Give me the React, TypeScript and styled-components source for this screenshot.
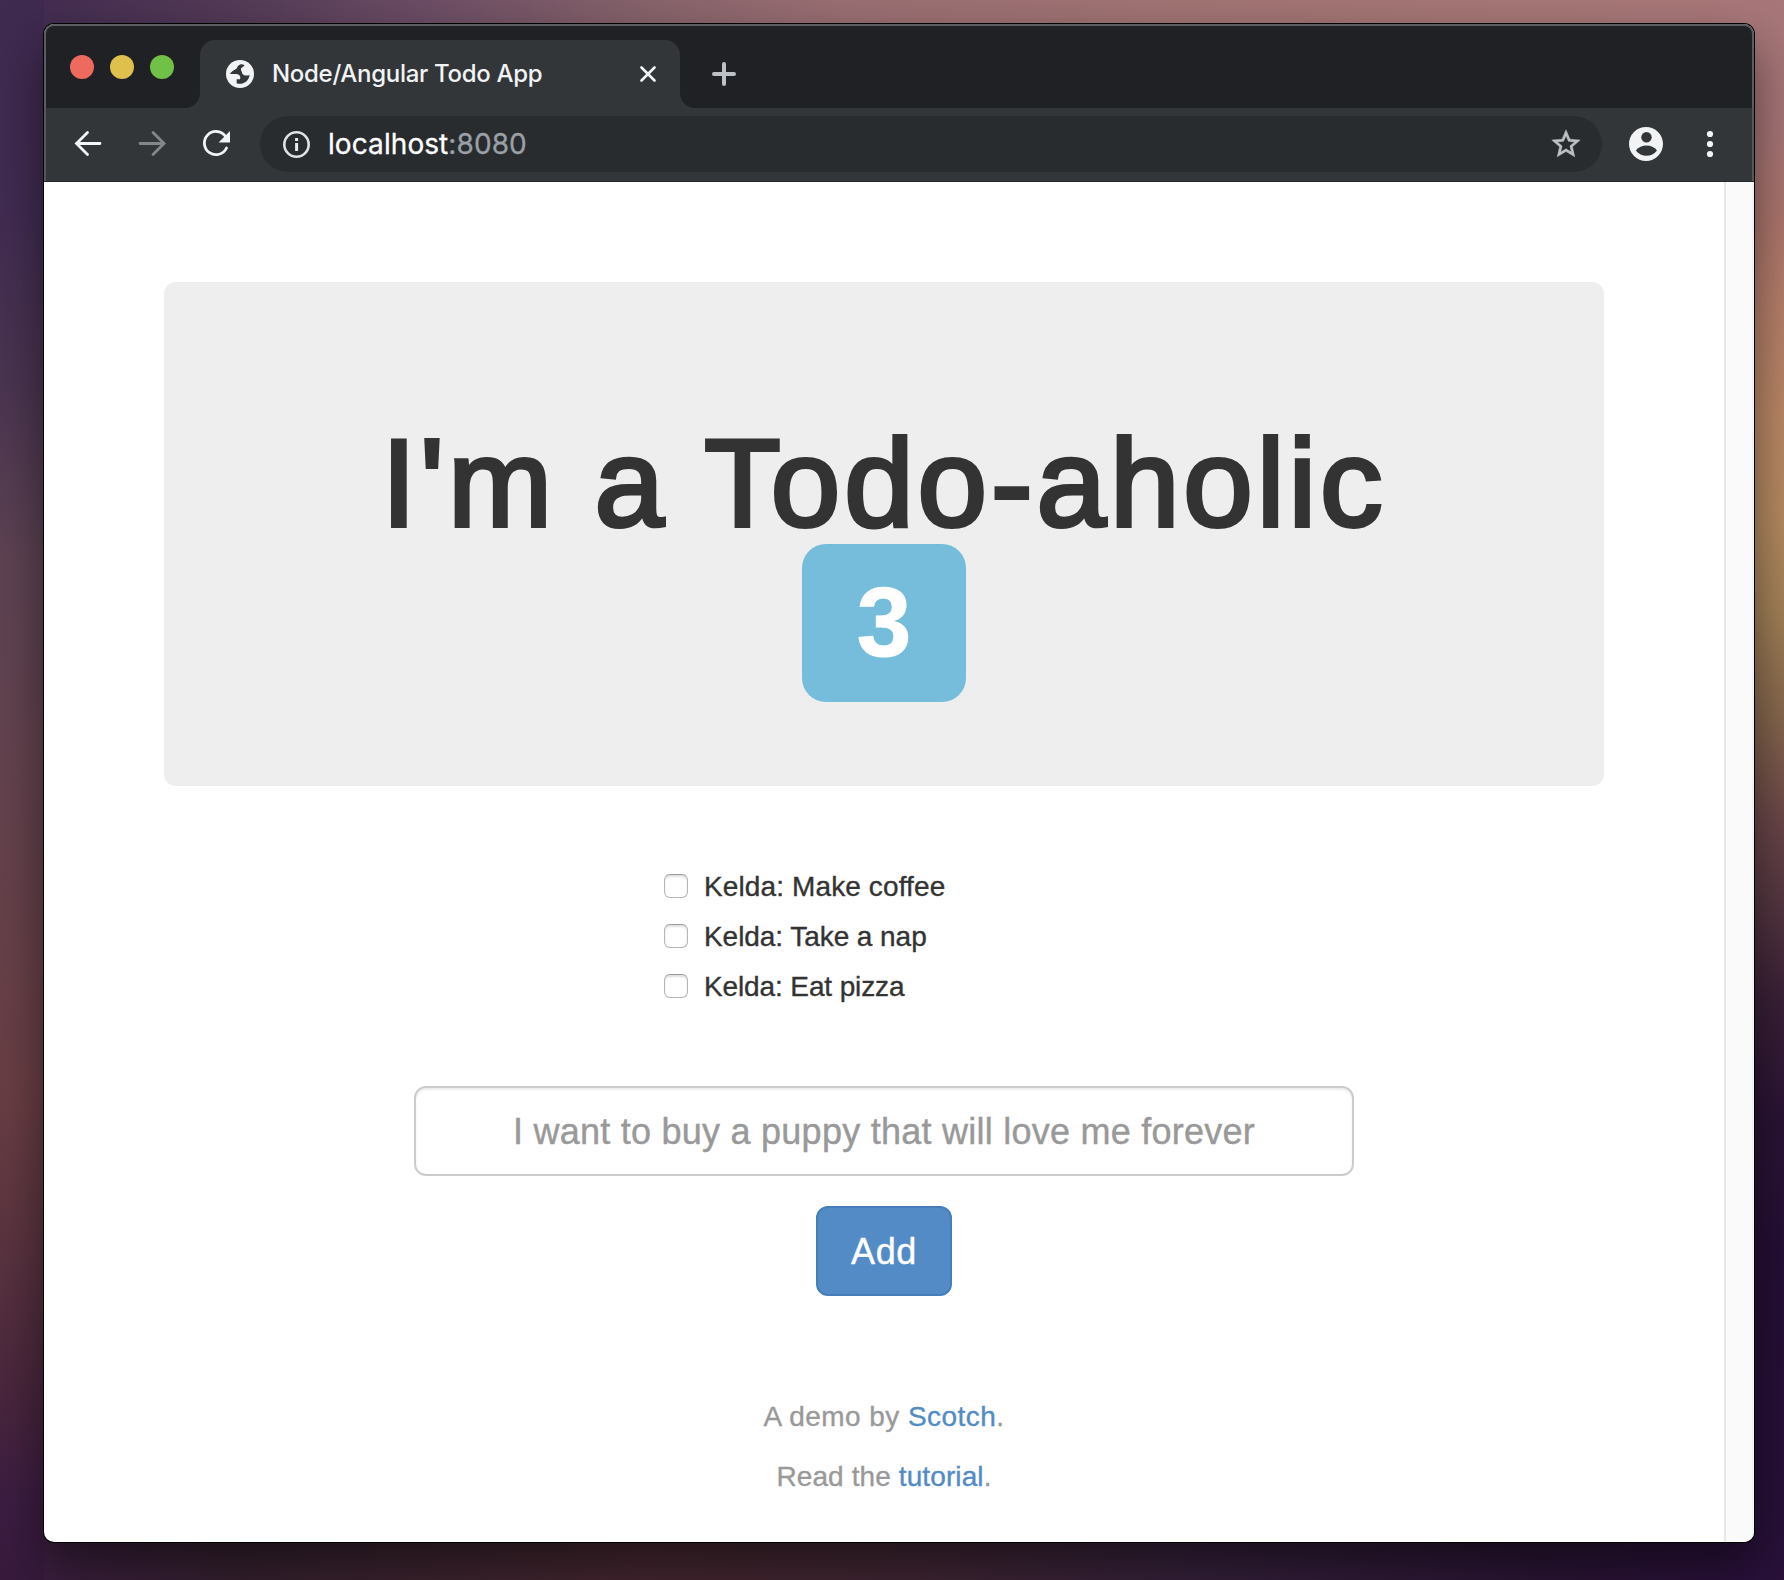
import React, { useState } from 'react';
import styled, { createGlobalStyle } from 'styled-components';

const helvetica = '"Liberation Sans", Arial, sans-serif';
const system = 'Inter, Roboto, sans-serif';

const GlobalStyle = createGlobalStyle`
  *, *::before, *::after { box-sizing: border-box; }
  body { margin: 0; font-family: ${helvetica}; color: #333; }
`;

const Desktop = styled.div`
  width: 1784px;
  height: 1580px;
  padding: 24px 30px 38px 44px;
  overflow: hidden;
  background:
    linear-gradient(90deg, #442d51 0, #543b57 200px, #6c4d65 380px, #87636b 600px, #9a6f73 800px, #a27474 1150px, #a67776 1450px, #a97779 1710px) 44px 0 / 1710px 60px no-repeat,
    linear-gradient(90deg, #3a1e3e 0, #34202e 200px, #44262f 600px, #3f2532 850px, #34203a 1150px, #2a1434 1500px, #29103a 1710px) 44px 1520px / 1710px 60px no-repeat,
    linear-gradient(180deg, #3f2a50 0, #412b52 200px, #4a3451 380px, #5e4353 560px, #64434f 760px, #684048 980px, #693e44 1100px, #5b3440 1240px, #4a263d 1390px, #3c1d42 1500px, #371a3c 1580px) 0 0 / 44px 1580px no-repeat,
    linear-gradient(180deg, #a77779 0, #a77577 130px, #ad766d 220px, #b67f6b 300px, #bb8966 420px, #b68b61 520px, #a48258 610px, #86674e 720px, #6b4749 820px, #50333f 920px, #3a2037 1000px, #2b1435 1110px, #250f35 1250px, #29113a 1580px) 1754px 0 / 30px 1580px no-repeat,
    #2b1739;
`;

const Window = styled.div`
  display: flex;
  flex-direction: column;
  height: 1518px;
  overflow: hidden;
  border-radius: 10px;
  background: #fff;
  box-shadow: 0 0 0 1px #000, 0 22px 50px rgba(0, 0, 0, 0.5);
`;

const Chrome = styled.header`
  flex: none;
  height: 158px;
  background: #323639;
  border-radius: 10px 10px 0 0;
  border-bottom: 1px solid #25282a;
  overflow: hidden;
  box-shadow: inset 2px 0 #55585b, inset -2px 0 #55585b;
`;

const TabStrip = styled.div`
  display: flex;
  height: 84px;
  padding: 14px 0 0 24px;
  background: #202124;
  border-radius: 10px 10px 0 0;
  border: solid #5c5d60;
  border-width: 2px 2px 0;
`;

const Lights = styled.div`
  display: flex;
  gap: 16px;
  width: 130px;
  padding-top: 15px;
`;

const Light = styled.span<{ $color: string }>`
  width: 24px;
  height: 24px;
  border-radius: 50%;
  background: ${(p) => p.$color};
`;

const Tab = styled.div`
  position: relative;
  display: flex;
  align-items: center;
  width: 480px;
  height: 68px;
  padding: 0 24px 0 26px;
  border-radius: 15px 15px 0 0;
  background: #323639;

  &::before, &::after {
    content: '';
    position: absolute;
    bottom: 0;
    width: 15px;
    height: 15px;
  }
  &::before { left: -15px; background: radial-gradient(circle at 0 0, transparent 14.5px, #323639 15.5px); }
  &::after { right: -15px; background: radial-gradient(circle at 100% 0, transparent 14.5px, #323639 15.5px); }
`;

const TabTitle = styled.span`
  flex: 1;
  margin: 0 0 0 18px;
  font: 500 24px/30px ${system};
  letter-spacing: -0.3px;
  color: #f1f3f4;
  white-space: nowrap;
`;

const NewTab = styled.div`
  padding: 22px 0 0 32px;
`;

const Toolbar = styled.div`
  display: flex;
  align-items: center;
  height: 73px;
  padding: 0 0 1px 26px;
`;

const NavIcons = styled.div`
  display: flex;
  flex: none;
  align-items: center;
  gap: 28px;
  width: 190px;
  margin-top: -1px;
`;

const Omnibox = styled.div`
  display: flex;
  flex: none;
  align-items: center;
  width: 1342px;
  height: 56px;
  padding: 0 19px 0 18px;
  border-radius: 28px;
  background: #282c2f;
`;

const Url = styled.span`
  flex: 1;
  margin: 0 0 0 12px;
  font: 400 28px/36px ${system};
  letter-spacing: 0.08px;
  color: #fff;
  -webkit-text-stroke: 0.3px;
`;

const Port = styled.span`
  color: #9aa0a6;
`;

const Actions = styled.div`
  display: flex;
  flex: none;
  align-items: center;
  gap: 27px;
  margin: -1px 0 0 27px;
`;

const Viewport = styled.div`
  display: flex;
  flex: 1;
`;

const Page = styled.main`
  display: flex;
  flex-direction: column;
  align-items: center;
  width: 1680px;
  padding-top: 100px;
`;

const ScrollTrack = styled.div`
  width: 30px;
  border-left: 2px solid #e7e7e7;
  background: linear-gradient(90deg, #fafafa 26px, #f1f3f4 26px);
`;

const Jumbotron = styled.section`
  display: flex;
  flex-direction: column;
  align-items: center;
  width: 1440px;
  height: 504px;
  padding-top: 146px;
  border-radius: 12px;
  background: #eee;
`;

const Heading = styled.h1`
  margin: 0;
  font: 400 125px/110px ${helvetica};
  letter-spacing: 3.9px;
  -webkit-text-stroke: 4px #333;
  white-space: nowrap;
`;

const Badge = styled.span`
  width: 164px;
  height: 158px;
  margin-top: 6px;
  border-radius: 24px;
  background: #75bddb;
  color: #fff;
  font: 700 98px/157px ${helvetica};
  text-align: center;
  -webkit-text-stroke: 1px;
`;

const TodoList = styled.div`
  display: flex;
  flex-direction: column;
  gap: 10px;
  width: 440px;
  margin-top: 80px;
`;

const Todo = styled.label`
  display: flex;
  align-items: center;
  gap: 16px;
  height: 40px;
  font-size: 28px;
`;

const TodoText = styled.span<{ $spacing: number }>`
  padding-top: 2px;
  letter-spacing: ${(p) => p.$spacing}px;
  -webkit-text-stroke: 0.35px;
`;

const Checkbox = styled.input`
  appearance: none;
  width: 24px;
  height: 24px;
  margin: 0;
  border: 1.5px solid #b5b5b5;
  border-top-color: #999;
  border-radius: 6px;
  background: #fff;
  box-shadow: inset 0 2px 2px rgba(0, 0, 0, 0.12);
`;

const Field = styled.input`
  width: 940px;
  height: 90px;
  margin-top: 80px;
  padding: 2px 32px 0;
  border: 2px solid #ccc;
  border-radius: 12px;
  background: #fff;
  box-shadow: inset 0 2px 2px rgba(0, 0, 0, 0.075);
  color: #333;
  font: 36px ${helvetica};
  letter-spacing: 0.25px;
  text-align: center;
  -webkit-text-stroke: 0.4px;

  &::placeholder { color: #999; opacity: 1; }
`;

const AddButton = styled.button`
  width: 136px;
  height: 90px;
  margin-top: 30px;
  padding: 2px 0 0;
  border: 2px solid #457eb9;
  border-radius: 12px;
  background: #528bc5;
  color: #fff;
  font: 36px ${helvetica};
  letter-spacing: 0.6px;
  -webkit-text-stroke: 0.4px;
`;

const Footer = styled.footer`
  display: flex;
  flex-direction: column;
  gap: 20px;
  margin-top: 101px;
  color: #999;
  font-size: 28px;
  line-height: 40px;
  text-align: center;
  -webkit-text-stroke: 0.35px;
`;

const Line = styled.p<{ $spacing: number }>`
  margin: 0;
  letter-spacing: ${(p) => p.$spacing}px;
`;

const Link = styled.a`
  color: #528bc5;
  text-decoration: none;
`;

const todos = [
  { text: 'Kelda: Make coffee', spacing: 0.12 },
  { text: 'Kelda: Take a nap', spacing: -0.06 },
  { text: 'Kelda: Eat pizza', spacing: -0.12 },
];

const Globe = () => (
  <svg width="28" height="28" viewBox="0 0 16 16">
    <circle cx="8" cy="8" r="8" fill="#f1f3f4" />
    <path
      fill="#323639"
      d="M2.4 8C2.4 7 4.5 5.8 6 5C6.5 4 6.8 2.8 8.2 2.5C9.2 2.4 10 2.6 10.6 3C10 3.8 9 4.1 8.6 4.9C8.2 6 9.3 6.8 9.3 7.8C10.2 9 12.5 9.2 13.5 8.4C13.3 11.2 10.9 13.6 8 13.6C7.2 13.6 6.6 13.5 6.1 13.3V11H8C8.6 9.2 7.5 8 5.7 8Z"
    />
  </svg>
);

const Close = () => (
  <svg width="16" height="16" viewBox="0 0 16 16" stroke="#f1f3f4" strokeWidth="2.6" strokeLinecap="round">
    <path d="M1.5 1.5l13 13M14.5 1.5l-13 13" />
  </svg>
);

const Plus = () => (
  <svg width="24" height="24" viewBox="0 0 24 24" stroke="#bdc1c6" strokeWidth="4" strokeLinecap="round">
    <path d="M2 12h20M12 2v20" />
  </svg>
);

const Arrow = ({ forward = false }: { forward?: boolean }) => (
  <svg width="36" height="36" viewBox="0 0 36 36" fill="none" stroke={forward ? '#84878a' : '#f5f6f7'} strokeWidth="2.8" strokeLinecap="round">
    <path d={forward ? 'M6 17.5H30M19 6.5L30 17.5L19 28.5' : 'M30 17.5H6.5M17.5 6.5L6.5 17.5L17.5 28.5'} />
  </svg>
);

const Reload = () => (
  <svg width="36" height="36" viewBox="0 0 36 36" fill="none">
    <path d="M27.2 10A11.6 11.6 0 1 0 28.5 22" stroke="#f1f3f4" strokeWidth="2.8" strokeLinecap="round" />
    <path d="M32 5v11.4H20.6z" fill="#f1f3f4" />
  </svg>
);

const Info = () => (
  <svg width="38" height="38" viewBox="0 0 38 38" fill="none">
    <circle cx="18.5" cy="19.5" r="12.2" stroke="#dfe1e5" strokeWidth="2.6" />
    <path d="M17.1 18h3v8h-3zM17.1 13h3v3h-3z" fill="#e8eaed" />
  </svg>
);

const Star = () => (
  <svg width="34" height="34" viewBox="0 0 24 24" fill="#bdc1c6" stroke="#bdc1c6" strokeWidth="0.35">
    <path d="M22 9.24l-7.19-.62L12 2 9.19 8.63 2 9.24l5.46 4.73L5.82 21 12 17.27 18.18 21l-1.63-7.03L22 9.24zM12 15.4l-3.76 2.27 1-4.28-3.32-2.88 4.38-.38L12 6.1l1.71 4.04 4.38.38-3.32 2.88 1 4.28L12 15.4z" />
  </svg>
);

const Avatar = () => (
  <svg width="34" height="34" viewBox="0 0 34 34">
    <circle cx="17" cy="17" r="17" fill="#f1f3f4" />
    <circle cx="17.5" cy="10.2" r="5.2" fill="#323639" />
    <path d="M6.8 23.5C12 16.8 23 16.8 28 23.5C23 30.6 12 30.6 6.8 23.5Z" fill="#323639" />
  </svg>
);

const Dots = () => (
  <svg width="34" height="34" viewBox="0 0 34 34" fill="#f1f3f4">
    <circle cx="20" cy="7" r="3.1" />
    <circle cx="20" cy="17" r="3.1" />
    <circle cx="20" cy="27" r="3.1" />
  </svg>
);

export default function App() {
  const [value, setValue] = useState('');

  return (
    <Desktop>
      <GlobalStyle />
      <Window>
        <Chrome>
          <TabStrip>
            <Lights>
              <Light $color="#ee6a5f" />
              <Light $color="#e0c04c" />
              <Light $color="#71c047" />
            </Lights>
            <Tab>
              <Globe />
              <TabTitle>Node/Angular Todo App</TabTitle>
              <Close />
            </Tab>
            <NewTab>
              <Plus />
            </NewTab>
          </TabStrip>
          <Toolbar>
            <NavIcons>
              <Arrow />
              <Arrow forward />
              <Reload />
            </NavIcons>
            <Omnibox>
              <Info />
              <Url>
                localhost<Port>:8080</Port>
              </Url>
              <Star />
            </Omnibox>
            <Actions>
              <Avatar />
              <Dots />
            </Actions>
          </Toolbar>
        </Chrome>
        <Viewport>
          <Page>
            <Jumbotron>
              <Heading>I'm a Todo-aholic</Heading>
              <Badge>3</Badge>
            </Jumbotron>
            <TodoList>
              {todos.map((todo) => (
                <Todo key={todo.text}>
                  <Checkbox type="checkbox" />
                  <TodoText $spacing={todo.spacing}>{todo.text}</TodoText>
                </Todo>
              ))}
            </TodoList>
            <Field
              value={value}
              onChange={(e) => setValue(e.target.value)}
              placeholder="I want to buy a puppy that will love me forever"
            />
            <AddButton>Add</AddButton>
            <Footer>
              <Line $spacing={0.43}>
                A demo by <Link>Scotch</Link>.
              </Line>
              <Line $spacing={0.1}>
                Read the <Link>tutorial</Link>.
              </Line>
            </Footer>
          </Page>
          <ScrollTrack />
        </Viewport>
      </Window>
    </Desktop>
  );
}
